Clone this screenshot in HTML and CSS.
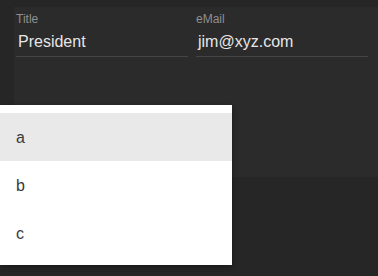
FILE: index.html
```html
<!DOCTYPE html>
<html>
<head>
<meta charset="utf-8">
<link rel="stylesheet" href="styles.css">
</head>
<body>
<div class="panel">
  <div class="fields">
    <div class="field">
      <div class="label">Title</div>
      <div class="value">President</div>
    </div>
    <div class="field">
      <div class="label">eMail</div>
      <div class="value">jim@xyz.com</div>
    </div>
  </div>
</div>
<div class="menu">
  <div class="item active">a</div>
  <div class="item">b</div>
  <div class="item">c</div>
</div>
</body>
</html>
```
FILE: styles.css
```css
html, body {
  margin: 0;
  padding: 0;
}
body {
  background: #262626;
  width: 378px;
  height: 276px;
  overflow: hidden;
  font-family: "Liberation Sans", Arial, sans-serif;
  position: relative;
}
.panel {
  margin: 7px 0 0 14px;
  height: 170px;
  background: #2b2b2b;
  padding: 0 10px 0 2px;
}
.fields {
  display: flex;
  gap: 8px;
  padding-top: 5px;
}
.field {
  flex: 1;
  border-bottom: 1px solid #454545;
}
.label {
  font-size: 12px;
  line-height: 14px;
  color: #8f8f8f;
}
.value {
  font-size: 16px;
  line-height: 20px;
  color: #e6e6e6;
  padding: 6px 0 4px 2px;
}
.menu {
  position: absolute;
  left: 0;
  top: 105px;
  width: 232px;
  padding: 8px 0;
  background: #ffffff;
  box-shadow: 0 2px 6px rgba(0,0,0,0.4);
}
.item {
  height: 48px;
  line-height: 50px;
  padding-left: 16px;
  font-size: 16px;
  color: #3a3a3a;
}
.item.active {
  background: #e9e9e9;
}
```
